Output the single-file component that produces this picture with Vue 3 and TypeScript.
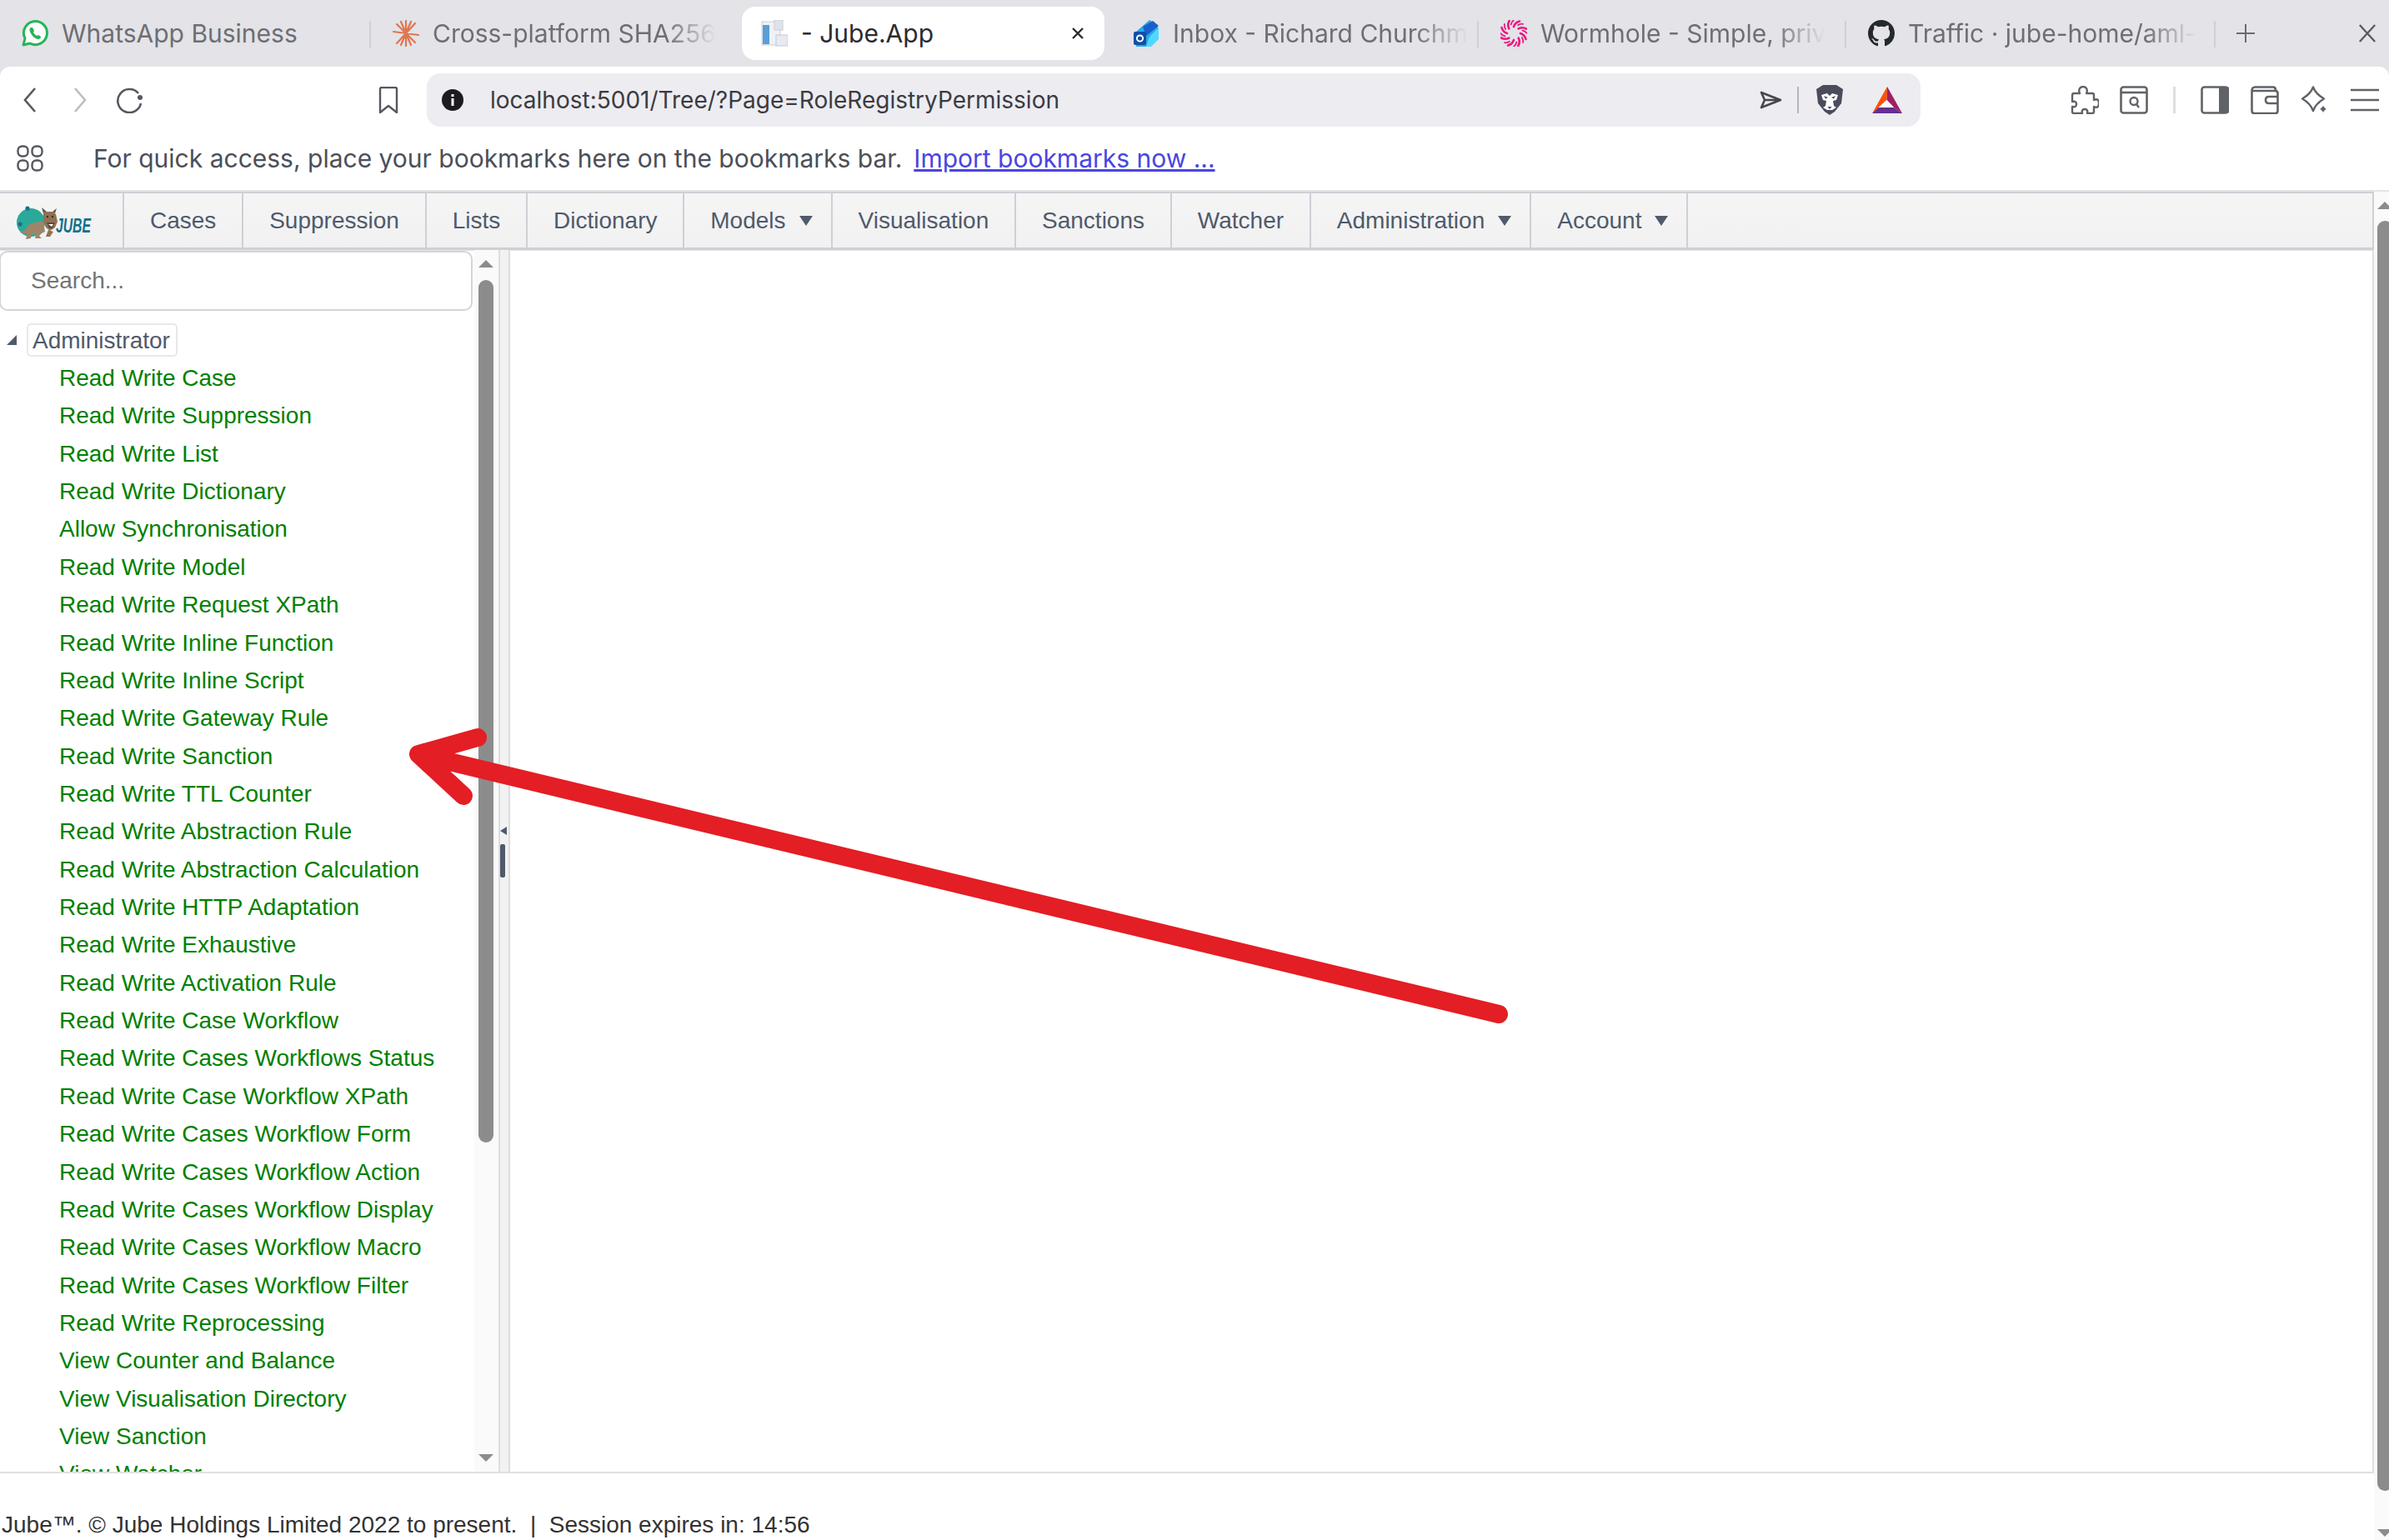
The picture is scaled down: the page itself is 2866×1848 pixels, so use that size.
<template>
  <div class="page">
    <!-- browser chrome -->
    <div class="chrome-top">
      <div class="tabstrip">
        <div
          v-for="tab in tabs"
          :key="tab.title"
          class="tab"
          :class="{ active: tab.active, sep: tab.sep }"
          :style="{ width: tab.width + 'px' }"
        >
          <svg v-if="tab.icon === 'whatsapp'" class="favicon" viewBox="0 0 32 32">
            <path d="M2 30l2-8A14 14 0 1 1 10 28z" fill="#fff" stroke="#25b558" stroke-width="3" stroke-linejoin="round" />
            <path d="M11 9c-2 1-2 4 0 7 2 4 6 7 9 7 2 0 3-1 3-3l-3-2-2 1c-2-1-3-3-4-4l1-2-2-4z" fill="#25b558" />
          </svg>
          <svg v-else-if="tab.icon === 'star'" class="favicon" viewBox="0 0 32 32">
            <g stroke="#e0764f" stroke-width="2.200" stroke-linecap="round">
              <path d="M16 1v30M1 14l30 4M5 5l22 22M27 4L5 28M10 2l12 28M22 2L10 30" />
            </g>
          </svg>
          <svg v-else-if="tab.icon === 'doc'" class="favicon" viewBox="0 0 32 32">
            <rect x="1" y="2" width="22" height="28" fill="#eef1f5" stroke="#c9ced6" />
            <rect x="2" y="6" width="8" height="23" fill="#5a9fd8" />
            <rect x="16" y="0" width="10" height="12" fill="#dfe3e9" stroke="#c9ced6" />
            <rect x="18" y="18" width="14" height="13" fill="#e7eaef" stroke="#c4c9d1" />
          </svg>
          <svg v-else-if="tab.icon === 'outlook'" class="favicon" viewBox="0 0 32 32">
            <path d="M4 14L20 0l10 6v16L16 32H4z" fill="#28a8ea" />
            <path d="M12 8L24 1l7 6-15 12z" fill="#1b5fc9" />
            <path d="M20 20l11-11v14l-9 9h-6z" fill="#50d9ff" />
            <rect x="1" y="14" width="15" height="16" rx="2" fill="#0f4fa8" />
            <circle cx="8.500" cy="22" r="3.600" fill="none" stroke="#fff" stroke-width="2" />
          </svg>
          <svg v-else-if="tab.icon === 'wormhole'" class="favicon" viewBox="0 0 32 32">
            <g fill="none" stroke="#f0157f" stroke-linecap="round">
              <path
                v-for="a in spiralAngles"
                :key="a"
                :transform="`rotate(${a} 16 16)`"
                d="M16 8C17 5 19 2.500 23 1.500"
                stroke-width="2.600"
              />
              <path
                v-for="a in spiralAngles"
                :key="'o' + a"
                :transform="`rotate(${a + 22} 16 16)`"
                d="M17 5C18 3.500 20 2 22 1.500"
                stroke-width="1.800"
              />
            </g>
          </svg>
          <svg v-else-if="tab.icon === 'github'" class="favicon" viewBox="0 0 16 16">
            <path fill="#24292e" d="M8 0C3.58 0 0 3.58 0 8c0 3.54 2.29 6.53 5.47 7.59.4.07.55-.17.55-.38 0-.19-.01-.82-.01-1.49-2.01.37-2.53-.49-2.69-.94-.09-.23-.48-.94-.82-1.13-.28-.15-.68-.52-.01-.53.63-.01 1.08.58 1.23.82.72 1.21 1.87.87 2.33.66.07-.52.28-.87.51-1.07-1.78-.2-3.64-.89-3.64-3.95 0-.87.31-1.59.82-2.15-.08-.2-.36-1.02.08-2.12 0 0 .67-.21 2.2.82.64-.18 1.32-.27 2-.27s1.36.09 2 .27c1.53-1.04 2.2-.82 2.2-.82.44 1.1.16 1.92.08 2.12.51.56.82 1.27.82 2.15 0 3.07-1.87 3.75-3.65 3.95.29.25.54.73.54 1.48 0 1.07-.01 1.93-.01 2.2 0 .21.15.46.55.38A8.01 8.01 0 0 0 16 8c0-4.42-3.58-8-8-8z" />
          </svg>
          <span class="tab-title" :class="{ fade: tab.fade }">{{ tab.title }}</span>
          <svg v-if="tab.active" class="tab-close" viewBox="0 0 16 16">
            <path d="M2 2l12 12M14 2L2 14" stroke="#2b2b30" stroke-width="2.400" />
          </svg>
        </div>
        <svg class="newtab" viewBox="0 0 22 22">
          <path d="M11 0v22M0 11h22" stroke="#6b6b72" stroke-width="2" />
        </svg>
        <svg class="winclose" viewBox="0 0 24 24">
          <path d="M2 1l20 22M22 1L2 23" stroke="#55585f" stroke-width="2.400" />
        </svg>
      </div>

      <div class="toolbar">
        <svg class="tb back" viewBox="0 0 16 30"><path d="M14 1L2 15l12 14" fill="none" stroke="#55585f" stroke-width="2.600" /></svg>
        <svg class="tb forward" viewBox="0 0 16 30"><path d="M2 1l12 14L2 29" fill="none" stroke="#bdbdc2" stroke-width="2.600" /></svg>
        <svg class="tb reload" viewBox="0 0 32 32">
          <path d="M27 8A14 14 0 1 0 30 20" fill="none" stroke="#55585f" stroke-width="2.600" />
          <circle cx="29" cy="13" r="3" fill="#55585f" />
        </svg>
        <svg class="tb bookmark" viewBox="0 0 24 32"><path d="M2 2.500Q2 1 4 1h16q2 0 2 1.500V31l-10-8-10 8z" fill="none" stroke="#55585f" stroke-width="2.400" stroke-linejoin="round" /></svg>
        <div class="addressbar">
          <svg class="info" viewBox="0 0 26 26">
            <circle cx="13" cy="13" r="13" fill="#1c1b22" />
            <rect x="11.500" y="11" width="3" height="9" fill="#fff" />
            <rect x="11.500" y="6" width="3" height="3" fill="#fff" />
          </svg>
          <span class="url">localhost:5001/Tree/?Page=RoleRegistryPermission</span>
          <svg class="send" viewBox="0 0 28 22">
            <path d="M2 2l23 9L2 20l4-9zM6 11h19" fill="none" stroke="#45474d" stroke-width="2.600" stroke-linejoin="round" />
          </svg>
          <span class="addr-sep"></span>
          <svg class="lion" viewBox="0 0 32 36">
            <path d="M8 0H24L32 5L30 22L22 32L16 36L10 32L2 22L0 5Z" fill="#4a4c5e" />
            <path d="M6 12L13 10L16 13L19 10L26 12L24 18L20 19L21 25L24 27L19 30H13L8 27L11 25L12 19L8 18Z" fill="#fff" />
            <path d="M9 13l5 2-3 1.500zM23 13l-5 2 3 1.500zM13.500 26h5L16 29z" fill="#4a4c5e" />
          </svg>
          <svg class="bat" viewBox="0 0 36 32">
            <path d="M18 0L0 32L7.500 25L17.500 16Z" fill="#ff5000" />
            <path d="M18 0L36 32L26 25L17.500 16Z" fill="#9e1f63" />
            <path d="M0 32H36L26 25H7.500Z" fill="#662d91" />
            <path d="M17.500 16L26 25H7.500Z" fill="#fff" />
          </svg>
        </div>
        <svg class="tb puzzle" viewBox="0 0 34 34">
          <path d="M4 9h7c-2-4 0-8 4-8s6 4 4 8h7q2 0 2 2v6c4-2 6 0 6 4s-2 6-6 4v6q0 2-2 2h-6c1-4-1-5-3-5s-4 1-3 5H4q-2 0-2-2v-6c4 1 5-1 5-3s-1-4-5-3v-7q0-3 2-3z" fill="none" stroke="#5f6368" stroke-width="2.400" stroke-linejoin="round" />
        </svg>
        <svg class="tb reader" viewBox="0 0 34 34">
          <rect x="1.500" y="1.500" width="31" height="31" rx="3" fill="none" stroke="#5f6368" stroke-width="2.600" />
          <path d="M2 8h30" stroke="#5f6368" stroke-width="2.600" />
          <circle cx="17" cy="18.500" r="4.500" fill="none" stroke="#5f6368" stroke-width="2.400" />
          <path d="M20 22l3 4" stroke="#5f6368" stroke-width="2.400" />
        </svg>
        <span class="tb-sep"></span>
        <svg class="tb sidebar" viewBox="0 0 34 34">
          <rect x="1.500" y="1.500" width="31" height="31" rx="3" fill="none" stroke="#5f6368" stroke-width="2.600" />
          <rect x="22" y="1" width="12" height="32" rx="2" fill="#5f6368" />
        </svg>
        <svg class="tb wallet" viewBox="0 0 34 34">
          <path d="M5 1.500h22q3 0 3 4M1.500 6q0-4.500 4-4.500M1.500 6v24q0 3 3 3h25q3 0 3-3V9q0-3-3-3H1.500" fill="none" stroke="#5f6368" stroke-width="2.600" />
          <path d="M32 13H22q-4 0-4 4t4 4h10" fill="none" stroke="#5f6368" stroke-width="2.600" />
        </svg>
        <svg class="tb stars" viewBox="0 0 34 34">
          <path d="M15 1.500C17 7 22 12 28 15.500C22 19 17 24 15 30C13 24 8 19 2 15.500C8 12 13 7 15 1.500Z" fill="none" stroke="#5f6368" stroke-width="2.400" stroke-linejoin="round" />
          <path d="M27 22c.5 3 2 4.500 5 6-3 1-4.500 2.500-5 6-.5-3.500-2-5-5-6 3-1.500 4.500-3 5-6z" fill="#5f6368" stroke="#fff" stroke-width="1" />
        </svg>
        <svg class="tb burger" viewBox="0 0 34 28">
          <path d="M0 2h34M0 14h34M0 26h34" stroke="#5f6368" stroke-width="2.600" />
        </svg>
      </div>
    </div>

    <div class="bookmarks">
      <svg class="grid-icon" viewBox="0 0 32 32">
        <g fill="none" stroke="#55585f" stroke-width="2.400">
          <rect x="1.500" y="1.500" width="12" height="12" rx="5" />
          <rect x="18.500" y="1.500" width="12" height="12" rx="5" />
          <rect x="1.500" y="18.500" width="12" height="12" rx="5" />
          <rect x="18.500" y="18.500" width="12" height="12" rx="5" />
        </g>
      </svg>
      <span>For quick access, place your bookmarks here on the bookmarks bar.</span>
      <a class="import">Import bookmarks now ...</a>
    </div>

    <!-- page -->
    <div class="viewport">
      <div class="app">
        <nav class="menu">
          <div class="brand">
            <svg class="logo" viewBox="0 0 100 50">
              <circle cx="23" cy="27" r="17" fill="#2aa99b" />
              <circle cx="19" cy="10" r="2.600" fill="#1c6d86" />
              <circle cx="10" cy="29" r="2.600" fill="#1c6d86" />
              <!-- bull -->
              <path d="M18 33C22 27 30 26 38 26L40 38L36 40L33 43L36 46H28L29 41H24L23 46L17 47L19 40L14 40L10 39L16 36Z" fill="#a08468" />
              <path d="M44 36L50 38L46 44H41Z" fill="#8f7255" />
              <path d="M38 16L42 14H49L53 17L55 26L52 33L46 37L41 33L38 26Z" fill="#8f7255" />
              <path d="M38 16L36 9L42 14ZM52 16L54 10L49 14Z" fill="#6b5540" />
              <path d="M42 27H52L49 34H45Z" fill="#5f4835" />
              <path d="M44 29H50L48 32Z" fill="#fff" />
              <circle cx="43" cy="20" r="1.200" fill="#3d2c1f" />
              <circle cx="49" cy="20" r="1.200" fill="#3d2c1f" />
              <text x="53" y="39" class="logo-text" textLength="42" lengthAdjust="spacingAndGlyphs">JUBE</text>
            </svg>
          </div>
          <a v-for="item in menuItems" :key="item.label" class="menu-item" :class="{ 'has-caret': item.caret }">
            {{ item.label }}
            <span v-if="item.caret" class="caret"></span>
          </a>
        </nav>

        <div class="split">
          <aside class="west">
            <div class="west-scroll">
              <input class="search" type="text" placeholder="Search..." />
              <div class="tree">
                <div class="tree-root">
                  <span class="tree-toggle"></span>
                  <span class="tree-node">Administrator</span>
                </div>
                <div class="tree-items">
                  <div v-for="perm in permissions" :key="perm" class="tree-item">{{ perm }}</div>
                </div>
              </div>
            </div>
            <div class="west-bar">
              <span class="arrow-up"></span>
              <span class="west-thumb"></span>
              <span class="arrow-down"></span>
            </div>
          </aside>
          <div class="splitter">
            <span class="collapse"></span>
            <span class="handle"></span>
          </div>
          <main class="center"></main>
        </div>

        <footer class="footer">Jube™. © Jube Holdings Limited 2022 to present. &nbsp;|&nbsp; Session expires in: 14:56</footer>
      </div>
      <div class="page-bar">
        <span class="arrow-up"></span>
        <span class="page-thumb"></span>
        <span class="arrow-down"></span>
      </div>
    </div>

    <!-- red annotation arrow drawn over the screenshot -->
    <svg class="annotation" viewBox="0 0 2866 1848">
      <path
        d="M1798 1217L502 905M573 885L502 905L556 955"
        fill="none"
        stroke="#e31e24"
        stroke-width="22"
        stroke-linecap="round"
        stroke-linejoin="round"
      />
    </svg>
  </div>
</template>

<script setup lang="ts">
interface Tab {
  title: string;
  icon: string;
  width: number;
  active?: boolean;
  sep?: boolean;
  fade?: boolean;
}

const tabs: Tab[] = [
  { title: "WhatsApp Business", icon: "whatsapp", width: 445, sep: true },
  { title: "Cross-platform SHA256", icon: "star", width: 445, fade: true },
  { title: "- Jube.App", icon: "doc", width: 435, active: true },
  { title: "Inbox - Richard Churchm", icon: "outlook", width: 441, sep: true, fade: true },
  { title: "Wormhole - Simple, priv", icon: "wormhole", width: 441, sep: true, fade: true },
  { title: "Traffic · jube-home/aml-", icon: "github", width: 443, sep: true, fade: true },
];

const spiralAngles = [0, 45, 90, 135, 180, 225, 270, 315];

const menuItems = [
  { label: "Cases" },
  { label: "Suppression" },
  { label: "Lists" },
  { label: "Dictionary" },
  { label: "Models", caret: true },
  { label: "Visualisation" },
  { label: "Sanctions" },
  { label: "Watcher" },
  { label: "Administration", caret: true },
  { label: "Account", caret: true },
];

const permissions = [
  "Read Write Case",
  "Read Write Suppression",
  "Read Write List",
  "Read Write Dictionary",
  "Allow Synchronisation",
  "Read Write Model",
  "Read Write Request XPath",
  "Read Write Inline Function",
  "Read Write Inline Script",
  "Read Write Gateway Rule",
  "Read Write Sanction",
  "Read Write TTL Counter",
  "Read Write Abstraction Rule",
  "Read Write Abstraction Calculation",
  "Read Write HTTP Adaptation",
  "Read Write Exhaustive",
  "Read Write Activation Rule",
  "Read Write Case Workflow",
  "Read Write Cases Workflows Status",
  "Read Write Case Workflow XPath",
  "Read Write Cases Workflow Form",
  "Read Write Cases Workflow Action",
  "Read Write Cases Workflow Display",
  "Read Write Cases Workflow Macro",
  "Read Write Cases Workflow Filter",
  "Read Write Reprocessing",
  "View Counter and Balance",
  "View Visualisation Directory",
  "View Sanction",
  "View Watcher",
];
</script>

<style>
html,
body {
  margin: 0;
  overflow: hidden;
}
</style>

<style scoped>
.page {
  position: relative;
  width: 2866px;
  height: 1848px;
  display: flex;
  flex-direction: column;
  overflow: hidden;
  background: #fff;
  font-family: "Liberation Sans", Arial, sans-serif;
}
.chrome-top {
  flex: none;
  background: #e3e3e8;
}

/* tab strip */
.tabstrip {
  height: 80px;
  display: flex;
  align-items: center;
  font-family: Inter, "Noto Sans", sans-serif;
  font-size: 30px;
  color: #6e6e73;
}
.tab {
  position: relative;
  box-sizing: border-box;
  height: 64px;
  display: flex;
  align-items: center;
  gap: 16px;
  padding-left: 26px;
  flex: none;
}
.tab.sep::after {
  content: "";
  position: absolute;
  right: 0;
  top: 17px;
  width: 2px;
  height: 32px;
  background: #cfcfd4;
}
.tab.active {
  background: #fff;
  border-radius: 16px;
  color: #2b2b30;
  padding: 0 24px 0 23px;
  margin-right: 8px;
}
.favicon {
  width: 32px;
  height: 32px;
  flex: none;
}
.tab-title {
  white-space: nowrap;
}
.tab-title.fade {
  -webkit-mask-image: linear-gradient(to right, #000 82%, rgba(0, 0, 0, 0.05) 99%);
  mask-image: linear-gradient(to right, #000 82%, rgba(0, 0, 0, 0.05) 99%);
}
.tab-close {
  width: 16px;
  height: 16px;
  flex: none;
  margin-left: auto;
}
.newtab {
  width: 22px;
  height: 22px;
  flex: none;
  margin-left: 25px;
}
.winclose {
  width: 22px;
  height: 24px;
  flex: none;
  margin-left: 124px;
}

/* toolbar */
.toolbar {
  height: 80px;
  display: flex;
  align-items: center;
  background: #fff;
  border-radius: 12px 12px 0 0;
}
.tb {
  flex: none;
}
.back {
  width: 16px;
  height: 30px;
  margin-left: 28px;
}
.forward {
  width: 16px;
  height: 30px;
  margin-left: 44px;
}
.reload {
  width: 32px;
  height: 32px;
  margin-left: 35px;
}
.bookmark {
  width: 24px;
  height: 32px;
  margin-left: 283px;
}
.addressbar {
  flex: none;
  box-sizing: border-box;
  width: 1792px;
  height: 64px;
  margin-left: 34px;
  padding-left: 18px;
  display: flex;
  align-items: center;
  background: #edecf1;
  border-radius: 16px;
}
.info {
  width: 26px;
  height: 26px;
  flex: none;
}
.url {
  margin-left: 32px;
  font-family: Inter, "Noto Sans", sans-serif;
  font-size: 28px;
  color: #3b3b40;
  white-space: nowrap;
  flex: 1;
}
.send {
  width: 28px;
  height: 22px;
  flex: none;
}
.addr-sep {
  width: 2px;
  height: 32px;
  background: #b5b5ba;
  margin-left: 17px;
}
.lion {
  width: 32px;
  height: 36px;
  margin-left: 21px;
  flex: none;
}
.bat {
  width: 36px;
  height: 32px;
  margin-left: 35px;
  margin-right: 22px;
  flex: none;
}
.puzzle {
  width: 34px;
  height: 34px;
  margin-left: 180px;
}
.reader {
  width: 34px;
  height: 34px;
  margin-left: 25px;
}
.tb-sep {
  width: 3px;
  height: 32px;
  background: #dedee3;
  margin-left: 30px;
}
.sidebar {
  width: 34px;
  height: 34px;
  margin-left: 30px;
}
.wallet {
  width: 34px;
  height: 34px;
  margin-left: 26px;
}
.stars {
  width: 34px;
  height: 34px;
  margin-left: 26px;
}
.burger {
  width: 34px;
  height: 28px;
  margin-left: 26px;
}

/* bookmarks bar */
.bookmarks {
  height: 68px;
  flex: none;
  display: flex;
  align-items: center;
  font-family: Inter, "Noto Sans", sans-serif;
  font-size: 30px;
  color: #4b4f58;
  white-space: nowrap;
  box-sizing: border-box;
  padding: 0 0 9px 20px;
}
.grid-icon {
  width: 32px;
  height: 32px;
  flex: none;
  margin-right: 60px;
}
.import {
  margin-left: 14px;
  color: #4a45e0;
  text-decoration: underline;
}

/* page */
.viewport {
  flex: 1;
  min-height: 0;
  display: flex;
  border-top: 2px solid #e3e3e8;
}
.app {
  width: 2848px;
  flex: none;
  display: flex;
  flex-direction: column;
  min-height: 0;
}
.menu {
  height: 70px;
  flex: none;
  box-sizing: border-box;
  display: flex;
  border-top: 2px solid #cfcfd6;
  border-bottom: 3px solid #cfcfd6;
  border-right: 2px solid #cfcfd6;
  box-shadow: 0 1px 0 #e3e3e8;
  background: linear-gradient(#f5f5f5, #f1f1f1);
  color: #4f5a6b;
  font-size: 28px;
  white-space: nowrap;
}
.brand {
  box-sizing: border-box;
  width: 149px;
  flex: none;
  border-right: 2px solid #cfcfd6;
  display: flex;
  align-items: center;
  padding-left: 14px;
}
.logo {
  width: 100px;
  height: 50px;
  flex: none;
}
.logo-text {
  font-family: "Liberation Sans", sans-serif;
  font-weight: 700;
  font-style: italic;
  font-size: 24px;
  fill: #14708c;
}
.menu-item {
  display: flex;
  align-items: center;
  padding: 0 30.800px 0 31px;
  border-right: 2px solid #cfcfd6;
}
.menu-item.has-caret {
  padding-right: 22px;
}
.caret {
  width: 0;
  height: 0;
  margin-left: 16px;
  border-left: 8px solid transparent;
  border-right: 8px solid transparent;
  border-top: 12px solid #4f5a6b;
}

.split {
  flex: 1;
  min-height: 0;
  display: flex;
  border-bottom: 2px solid #e0e0e0;
}
.west {
  width: 598px;
  flex: none;
  display: flex;
  min-height: 0;
}
.west-scroll {
  width: 569px;
  flex: none;
  overflow: hidden;
}
.search {
  display: block;
  box-sizing: border-box;
  width: 568px;
  height: 72px;
  margin: 1px 0 0 -1px;
  padding: 0 0 0 36px;
  border: 2px solid #d4d4d8;
  border-radius: 10px;
  font-family: "Liberation Sans", Arial, sans-serif;
  font-size: 28px;
  color: #333;
  outline: none;
}
.search::placeholder {
  color: #757575;
}
.tree {
  padding-top: 15px;
  font-size: 28px;
}
.tree-root {
  height: 40px;
  display: flex;
  align-items: center;
  padding-left: 8px;
}
.tree-toggle {
  width: 0;
  height: 0;
  border-left: 12px solid transparent;
  border-bottom: 12px solid #4f5a6b;
  margin-right: 12px;
}
.tree-node {
  box-sizing: border-box;
  height: 40px;
  line-height: 37px;
  padding: 0 7px 0 5px;
  border: 2px solid #e8e8ec;
  border-radius: 5px;
  color: #4f5a6b;
}
.tree-items {
  padding-top: 3px;
}
.tree-item {
  height: 45.360px;
  line-height: 45.360px;
  padding-left: 71px;
  color: #008000;
  white-space: nowrap;
}
.west-bar,
.page-bar {
  position: relative;
  background: #fafafa;
  overflow: hidden;
}
.west-bar {
  width: 29px;
  flex: none;
}
.arrow-up,
.arrow-down {
  position: absolute;
  width: 0;
  height: 0;
  border-left: 9px solid transparent;
  border-right: 9px solid transparent;
}
.arrow-up {
  border-bottom: 9px solid #8c8c8c;
}
.arrow-down {
  border-top: 9px solid #8c8c8c;
}
.west-bar .arrow-up {
  left: 5px;
  top: 12px;
}
.west-bar .arrow-down {
  left: 5px;
  bottom: 12px;
}
.west-thumb {
  position: absolute;
  left: 5px;
  top: 36px;
  width: 18px;
  height: 1035px;
  border-radius: 9px;
  background: #8c8c8c;
}
.splitter {
  position: relative;
  box-sizing: border-box;
  width: 14px;
  flex: none;
  background: #f2f2f2;
  border-left: 2px solid #ddd;
  border-right: 2px solid #ddd;
}
.collapse {
  position: absolute;
  left: 0;
  top: 692px;
  width: 0;
  height: 0;
  border-top: 5px solid transparent;
  border-bottom: 5px solid transparent;
  border-right: 8px solid #4f5a6b;
}
.handle {
  position: absolute;
  left: 0;
  top: 713px;
  width: 6px;
  height: 40px;
  border-radius: 2px;
  background: #4f5a6b;
}
.center {
  flex: 1;
  border-right: 2px solid #e0e0e0;
}
.footer {
  height: 80px;
  flex: none;
  box-sizing: border-box;
  padding: 45px 0 0 2px;
  font-size: 28px;
  line-height: 34px;
  color: #333;
  white-space: nowrap;
}
.page-bar {
  flex: 1;
}
.page-bar .arrow-up {
  left: 4px;
  top: 12px;
}
.page-bar .arrow-down {
  left: 4px;
  bottom: 4px;
}
.page-thumb {
  position: absolute;
  left: 4px;
  top: 35px;
  width: 18px;
  height: 1524px;
  border-radius: 9px;
  background: #8c8c8c;
}

.annotation {
  position: absolute;
  left: 0;
  top: 0;
  width: 2866px;
  height: 1848px;
  pointer-events: none;
}
</style>
